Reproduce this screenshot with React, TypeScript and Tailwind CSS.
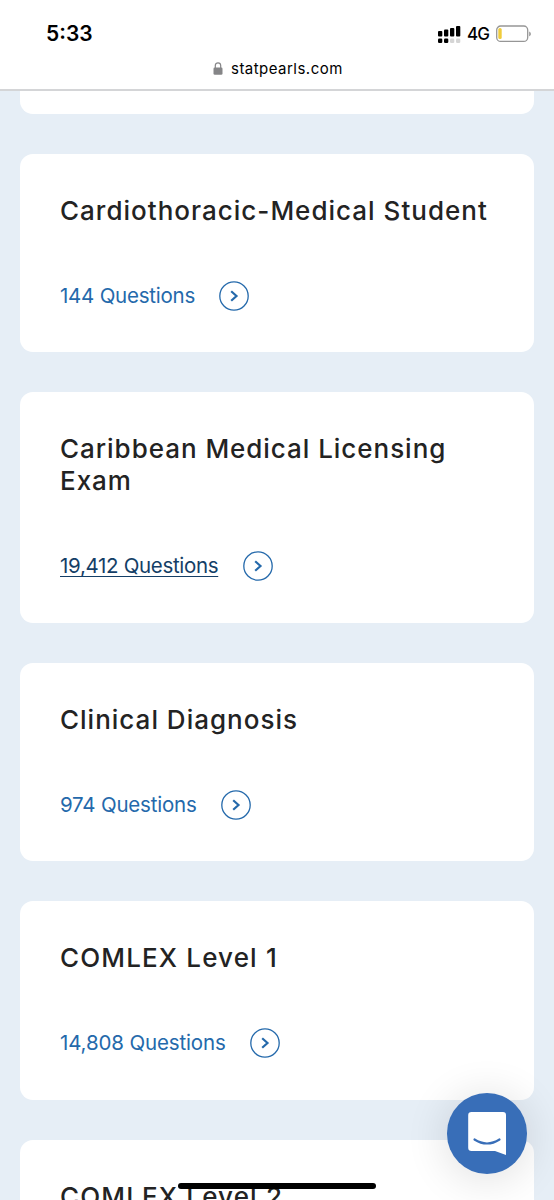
import React from "react";

type Exam = {
  title: string;
  count: string;
  titleClass: string;
  countClass: string;
  active?: boolean;
};

const exams: Exam[] = [
  { title: "Cardiothoracic-Medical Student", count: "144 Questions", titleClass: "tracking-[1.01px]", countClass: "w-[159px] tracking-[-0.23px]" },
  { title: "Caribbean Medical Licensing Exam", count: "19,412 Questions", titleClass: "tracking-[0.96px]", countClass: "w-[182.5px] tracking-[-0.32px]", active: true },
  { title: "Clinical Diagnosis", count: "974 Questions", titleClass: "tracking-[1px]", countClass: "w-[160.5px] tracking-[-0.2px]" },
  { title: "COMLEX Level 1", count: "14,808 Questions", titleClass: "tracking-[1.15px]", countClass: "w-[190px] tracking-[-0.14px]" },
  { title: "COMLEX Level 2", count: "12,604 Questions", titleClass: "tracking-[1.15px]", countClass: "w-[190px] tracking-[-0.14px]" },
];

function ArrowCircle() {
  return (
    <svg className="h-[30px] w-[30px] shrink-0" viewBox="0 0 30 30" fill="none" stroke="#2469ab">
      <circle cx="15" cy="15" r="14.2" strokeWidth="1.3" />
      <path d="M12.2 10.2 L17.5 15 L12.2 19.8" strokeWidth="2.2" />
    </svg>
  );
}

function ExamCard({ exam }: { exam: Exam }) {
  return (
    <article className="shrink-0 rounded-[13px] bg-white px-[40px] pt-[41px] pb-[41.4px]">
      <h2 className={`text-[26px] leading-8 font-medium text-[#232323] ${exam.titleClass}`}>{exam.title}</h2>
      <a className="mt-[54px] flex h-[30px] items-center">
        <span className={`text-[20.5px] leading-[30px] whitespace-nowrap ${exam.countClass} ${exam.active ? "text-[#143e66]" : "text-[#2469ab]"}`}>
          <span className={exam.active ? "underline decoration-1 underline-offset-[3px]" : ""}>{exam.count}</span>
        </span>
        <ArrowCircle />
      </a>
    </article>
  );
}

function StatusBar() {
  return (
    <div className="flex h-[50px] items-start justify-between pt-[20px] pr-[22px] pl-[46px]">
      <span className="text-[21px] leading-[28px] font-semibold">5:33</span>
      <div className="flex h-[27px] items-center">
        <svg className="h-[20px] w-[24px]" viewBox="0 0 24 20">
          <g fill="#000">
            <rect x="0" y="7" width="4.3" height="5.5" rx="1" />
            <rect x="6" y="5.5" width="4.3" height="7" rx="1" />
            <rect x="12" y="4" width="4.3" height="8.5" rx="1" />
            <rect x="18" y="2" width="4.3" height="10.5" rx="1" />
            <rect x="0" y="14.5" width="4.3" height="4.5" rx="1.2" />
            <rect x="6" y="14.5" width="4.3" height="4.5" rx="1.2" />
          </g>
          <rect x="12" y="14.5" width="4.3" height="4.5" rx="1.2" fill="#d5d5d5" />
          <rect x="18" y="14.5" width="4.3" height="4.5" rx="1.2" fill="#d5d5d5" />
        </svg>
        <span className="ml-[5px] w-[29px] pt-px text-[17px] leading-[27px] font-medium tracking-[-0.9px]">4G</span>
        <svg className="h-[18px] w-[36px]" viewBox="0 0 36 18">
          <rect x="0.7" y="1" width="31" height="15.4" rx="4" fill="none" stroke="#969696" strokeWidth="1.3" />
          <rect x="2.3" y="3" width="3.4" height="11" rx="1.5" fill="#f0cc3c" />
          <path d="M33.2 6.5 C35.4 7.3 35.4 10.5 33.2 11.3 Z" fill="#969696" />
        </svg>
      </div>
    </div>
  );
}

function ChatButton() {
  return (
    <button aria-label="Open chat" className="absolute top-[1093px] left-[447px] h-[81px] w-[80px] rounded-full bg-[#386eb8] shadow-[0_4px_40px_4px_rgba(0,0,0,0.11)]">
      <svg className="h-[81px] w-[80px]" viewBox="0 0 80 81">
        <path d="M24.5 19 H56 Q59 19 59 22 V62 L48 58 H24.5 Q21.2 58 21.2 54.7 V22.3 Q21.2 19 24.5 19 Z" fill="#fff" />
        <path d="M27.5 46.5 Q40 54.5 52.5 46.5" fill="none" stroke="#386eb8" strokeWidth="2.2" strokeLinecap="round" />
      </svg>
    </button>
  );
}

export default function App() {
  return (
    <div className="relative flex h-[1200px] w-[554px] flex-col overflow-hidden bg-[#e6eef6] font-['Inter',sans-serif] text-black">
      <header className="h-[91px] shrink-0 border-b-2 border-[#d4d5d7] bg-white">
        <StatusBar />
        <div className="flex h-[37px] items-center pl-[213px]">
          <svg className="h-[13px] w-[10px]" viewBox="0 0 10 13">
            <rect x="0.5" y="5.5" width="9" height="7.2" rx="1.3" fill="#858587" />
            <path d="M2.3 6 V3.6 C2.3 -0.1 7.7 -0.1 7.7 3.6 V6" fill="none" stroke="#858587" strokeWidth="1.2" />
          </svg>
          <span className="ml-[8px] pt-px text-[15px] tracking-[0.47px]">statpearls.com</span>
        </div>
      </header>
      <main className="flex flex-col gap-[40px] px-[20px]">
        <div className="h-[23px] shrink-0 rounded-b-[13px] bg-white" />
        {exams.map((exam) => (
          <ExamCard key={exam.title} exam={exam} />
        ))}
      </main>
      <ChatButton />
      <div className="absolute top-[1183px] left-[178px] h-[6px] w-[198px] rounded-full bg-black" />
    </div>
  );
}
